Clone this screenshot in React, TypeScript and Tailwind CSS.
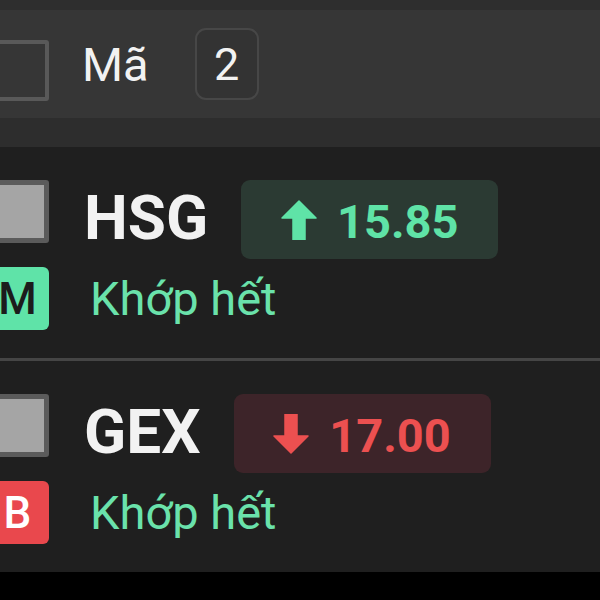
const font = { fontFamily: "Roboto, 'Noto Sans', sans-serif" };

type Order = {
  symbol: string;
  price: string;
  up: boolean;
  side: "M" | "B";
  status: string;
};

const orders: Order[] = [
  { symbol: "HSG", price: "15.85", up: true, side: "M", status: "Khớp hết" },
  { symbol: "GEX", price: "17.00", up: false, side: "B", status: "Khớp hết" },
];

const Arrow = ({ up, color }: { up: boolean; color: string }) => (
  <svg width="36" height="40" viewBox="0 0 36 40" className={up ? "" : "rotate-180"}>
    <path d="M18 1 L35 18 L24 18 L24 40 L12 40 L12 18 L1 18 Z" fill={color} strokeLinejoin="round" stroke={color} strokeWidth="1.5" />
  </svg>
);

const OrderRow = ({ o }: { o: Order }) => (
  <div className="flex flex-col pt-[33px] pb-[28px]">
    <div className="flex items-start h-[79px]">
      <div className="w-[63px] h-[63px] shrink-0 rounded-[3px] border-[5px] border-[#5b5b5b] bg-[#a5a5a5]" />
      <span className="ml-[35px] mt-[7px] text-[62px] font-bold leading-none text-[#f2f2f2]">{o.symbol}</span>
      <div
        className={`ml-[33px] w-[257px] h-[79px] shrink-0 rounded-[9px] flex items-center justify-center gap-[20px] ${
          o.up ? "bg-[#2b3a33] text-[#5fe3a7]" : "bg-[#3d2429] text-[#ec5050]"
        }`}
      >
        <Arrow up={o.up} color={o.up ? "#5fe3a7" : "#ec5050"} />
        <span className="text-[47px] font-bold leading-none mt-[4px]">{o.price}</span>
      </div>
    </div>
    <div className="flex items-center mt-[8px] h-[63px]">
      <div
        className={`w-[63px] h-[63px] shrink-0 rounded-[6px] flex items-center justify-center text-[44px] font-medium leading-none ${
          o.side === "M" ? "bg-[#5fe3a8] text-[#1c1c1c]" : "bg-[#e9484d] text-white"
        }`}
      >
        {o.side}
      </div>
      <span className="ml-[41px] text-[47px] leading-none text-[#6ae2ab]">{o.status}</span>
    </div>
  </div>
);

export default function App() {
  return (
    <div className="w-[600px] h-[600px] overflow-hidden bg-black flex flex-col" style={font}>
      <div className="h-[10px] bg-[#2e2e2e]" />
      <div className="h-[108px] bg-[#363636] flex items-center -ml-[12px]">
        <div className="w-[61px] h-[61px] shrink-0 rounded-[3px] border-[4px] border-[#595959] mt-[12px]" />
        <span className="ml-[33px] text-[47px] leading-none text-[#f2f2f2]">Mã</span>
        <div className="ml-[46px] w-[64px] h-[72px] rounded-[11px] border-2 border-[#474747] bg-[#333333] flex items-center justify-center text-[45px] leading-none text-[#f2f2f2]">
          2
        </div>
      </div>
      <div className="h-[29px] bg-[#2d2d2d]" />
      <div className="bg-[#1f1f1f] -ml-[14px]">
        <OrderRow o={orders[0]} />
        <div className="h-[3px] bg-[#454545] ml-[14px]" />
        <OrderRow o={orders[1]} />
      </div>
    </div>
  );
}
